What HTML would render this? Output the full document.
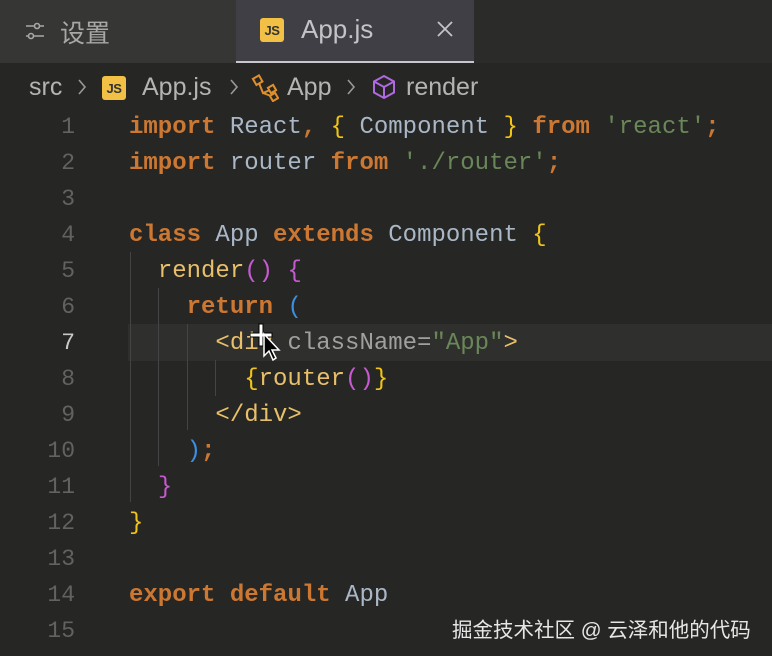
<!DOCTYPE html>
<html><head><meta charset="utf-8"><style>
html,body{margin:0;padding:0;width:772px;height:656px;overflow:hidden;background:#262624;}
body{position:relative;font-family:"Liberation Sans","Noto Sans CJK SC",sans-serif;}
.tabbar{position:absolute;left:0;top:0;width:772px;height:63px;background:#2b2b2a;}
.t1{position:absolute;left:0;top:0;width:236px;height:63px;background:#363635;color:#a8a8a8;font-size:25px;}
.t2{position:absolute;left:236px;top:0;width:238px;height:61px;background:#3f3f45;border-bottom:2px solid #c8c8cc;color:#c4c4c8;font-size:26px;}
.js{display:inline-block;background:#f1c045;color:#333;font-weight:bold;font-size:13px;border-radius:3px;width:24px;height:24px;line-height:25px;text-align:center;letter-spacing:-0.5px;}
.crumb{position:absolute;top:63px;left:0;width:772px;height:46px;color:#b4b4b4;font-size:25px;}
.chev{position:absolute;top:15px;}
.code{position:absolute;left:0;top:110px;width:772px;font-family:"Liberation Mono",monospace;font-size:24px;}
.ln{position:absolute;left:0;width:75px;text-align:right;color:#626262;font-size:23px;}
.l{position:absolute;left:129px;white-space:pre;color:#a9b7c6;}
.k{color:#cc7832;font-weight:bold;}
.s{color:#6a8759;}
.y{color:#f0c419;}
.p{color:#c65ad0;}
.b{color:#3d8fe0;}
.t{color:#e8bf6a;}
.g{position:absolute;width:1px;background:#444;}
</style></head><body>
<div class="tabbar">
 <div class="t1">
  <svg style="position:absolute;left:24px;top:20px" width="22" height="22" viewBox="0 0 22 22" stroke="#a8a8a8" stroke-width="1.6" fill="none"><line x1="2" y1="6" x2="20" y2="6"/><line x1="2" y1="16" x2="20" y2="16"/><circle cx="13" cy="6" r="2.5" fill="#363635"/><circle cx="7" cy="16" r="2.5" fill="#363635"/></svg>
  <span style="position:absolute;left:60px;top:14px">设置</span>
 </div>
 <div class="t2">
  <span class="js" style="position:absolute;left:24px;top:18px">JS</span>
  <span style="position:absolute;left:65px;top:14px">App.js</span>
  <svg style="position:absolute;left:200px;top:20px" width="18" height="18" viewBox="0 0 18 18" stroke="#c4c4c8" stroke-width="1.8"><line x1="2" y1="2" x2="16" y2="16"/><line x1="16" y1="2" x2="2" y2="16"/></svg>
 </div>
</div>
<div class="crumb">
 <span style="position:absolute;left:29px;top:10px">src</span>
 <svg class="chev" style="left:77px" width="10" height="18" viewBox="0 0 10 18" stroke="#999" stroke-width="1.6" fill="none"><path d="M2 2 L8 9 L2 16"/></svg>
 <span class="js" style="position:absolute;left:102px;top:13px">JS</span>
 <span style="position:absolute;left:142px;top:10px">App.js</span>
 <svg class="chev" style="left:229px" width="10" height="18" viewBox="0 0 10 18" stroke="#999" stroke-width="1.6" fill="none"><path d="M2 2 L8 9 L2 16"/></svg>
 <svg style="position:absolute;left:251px;top:11px" width="28" height="28" viewBox="0 0 28 28" stroke="#e0902a" stroke-width="2" fill="none"><rect x="3" y="3" width="7" height="7" transform="rotate(-30 6 6)"/><rect x="18" y="12" width="6" height="6" transform="rotate(-30 21 15)"/><rect x="20" y="20" width="6" height="6" transform="rotate(-30 23 23)"/><path d="M8 9 L12 19 L19 16 M12 19 L20 22"/></svg>
 <span style="position:absolute;left:287px;top:10px">App</span>
 <svg class="chev" style="left:346px" width="10" height="18" viewBox="0 0 10 18" stroke="#999" stroke-width="1.6" fill="none"><path d="M2 2 L8 9 L2 16"/></svg>
 <svg style="position:absolute;left:371px;top:11px" width="26" height="26" viewBox="0 0 26 26" stroke="#b069e0" stroke-width="2" fill="none"><path d="M13 2 L23 7.5 V18.5 L13 24 L3 18.5 V7.5 Z M3 7.5 L13 13 L23 7.5 M13 13 V24"/></svg>
 <span style="position:absolute;left:406px;top:10px">render</span>
</div>
<div style="position:absolute;left:128px;top:324px;width:644px;height:37px;background:#2f2f2e"></div>
<div class="g" style="left:130px;top:252px;height:250px"></div>
<div class="g" style="left:158px;top:288px;height:178px"></div>
<div class="g" style="left:187px;top:324px;height:106px"></div>
<div class="g" style="left:215px;top:360px;height:36px"></div>
<div class="code">
<div class="ln" style="top:4px">1</div><div class="l" style="top:4px"><span class="k">import</span> React<span class="k">,</span> <span class="y">{</span> Component <span class="y">}</span> <span class="k">from</span> <span class="s">'react'</span><span class="k">;</span></div>
<div class="ln" style="top:40px">2</div><div class="l" style="top:40px"><span class="k">import</span> router <span class="k">from</span> <span class="s">'./router'</span><span class="k">;</span></div>
<div class="ln" style="top:76px">3</div>
<div class="ln" style="top:112px">4</div><div class="l" style="top:112px"><span class="k">class</span> App <span class="k">extends</span> Component <span class="y">{</span></div>
<div class="ln" style="top:148px">5</div><div class="l" style="top:148px">  <span class="t">render</span><span class="p">()</span> <span class="p">{</span></div>
<div class="ln" style="top:184px">6</div><div class="l" style="top:184px">    <span class="k">return</span> <span class="b">(</span></div>
<div class="ln" style="top:220px;color:#c8c8c8">7</div><div class="l" style="top:220px">      <span class="t">&lt;div</span> <span style="color:#a0a0a0">className=</span><span class="s">"App"</span><span class="t">&gt;</span></div>
<div class="ln" style="top:256px">8</div><div class="l" style="top:256px">        <span class="y">{</span><span class="t">router</span><span class="p">()</span><span class="y">}</span></div>
<div class="ln" style="top:292px">9</div><div class="l" style="top:292px">      <span class="t">&lt;/div&gt;</span></div>
<div class="ln" style="top:328px">10</div><div class="l" style="top:328px">    <span class="b">)</span><span class="k">;</span></div>
<div class="ln" style="top:364px">11</div><div class="l" style="top:364px">  <span class="p">}</span></div>
<div class="ln" style="top:400px">12</div><div class="l" style="top:400px"><span class="y">}</span></div>
<div class="ln" style="top:436px">13</div>
<div class="ln" style="top:472px">14</div><div class="l" style="top:472px"><span class="k">export</span> <span class="k">default</span> App</div>
<div class="ln" style="top:508px">15</div>
</div>
<svg style="position:absolute;left:250px;top:322px" width="36" height="40" viewBox="0 0 36 40"><path d="M9 2h4v9h9v4h-9v9H9v-9H0v-4h9z" fill="#fff" stroke="#000" stroke-width="1"/><path d="M14 12 L14 34 L19 29 L23 38 L26 36 L22 28 L29 28 Z" fill="#000" stroke="#fff" stroke-width="1.5"/></svg>
<div style="position:absolute;left:452px;top:613px;color:#e6e6e6;font-size:20.5px;white-space:nowrap;">掘金技术社区 @ 云泽和他的代码</div>
</body></html>
